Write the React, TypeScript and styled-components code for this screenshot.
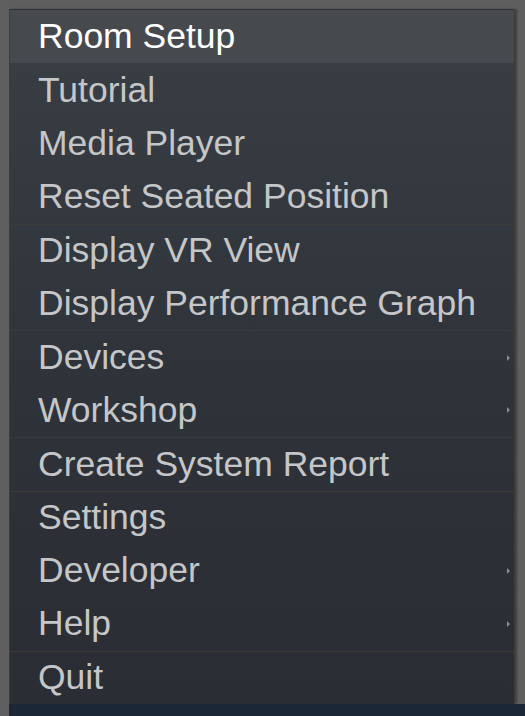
import React from "react";
import styled, { createGlobalStyle } from "styled-components";

const GlobalStyle = createGlobalStyle`
  html, body {
    margin: 0;
    padding: 0;
    background: #5f5f5f;
    height: 716px;
    overflow: hidden;
  }
`;

const Page = styled.div`
  display: flex;
  flex-direction: column;
  padding: 9px 0 0 9px;
`;

const Menu = styled.ul`
  list-style: none;
  margin: 0;
  padding: 0;
  width: 504px;
  background: linear-gradient(180deg, #3a3e45 0%, #2f333a 50%, #2a2d33 100%);
  border-top: 1px solid #2e3136;
  border-left: 1px solid #3a3d42;
  box-shadow: 3px 0 2px rgba(0, 0, 0, 0.35);
  font-family: "Liberation Sans", Arial, sans-serif;
`;

const Item = styled.li<{ $active?: boolean; $sep?: boolean }>`
  position: relative;
  display: flex;
  align-items: center;
  height: 53.4px;
  box-sizing: border-box;
  padding-left: 28px;
  font-size: 35.5px;
  color: ${(p) => (p.$active ? "#ffffff" : "#c4c6c8")};
  background: ${(p) => (p.$active ? "#46494e" : "transparent")};
  border-top: ${(p) => (p.$sep ? "1px solid #3d3b38" : "none")};
`;

const Arrow = styled.span`
  position: absolute;
  right: 4px;
  top: 50%;
  margin-top: -3px;
  width: 0;
  height: 0;
  border-top: 3px solid transparent;
  border-bottom: 3px solid transparent;
  border-left: 3px solid #8a8c8f;
`;

const Footer = styled.div`
  height: 12px;
  background: #1b2636;
`;

const items: { label: string; sep?: boolean; sub?: boolean; active?: boolean }[] = [
  { label: "Room Setup", active: true },
  { label: "Tutorial" },
  { label: "Media Player" },
  { label: "Reset Seated Position" },
  { label: "Display VR View", sep: true },
  { label: "Display Performance Graph" },
  { label: "Devices", sep: true, sub: true },
  { label: "Workshop", sub: true },
  { label: "Create System Report", sep: true },
  { label: "Settings", sep: true },
  { label: "Developer", sub: true },
  { label: "Help", sub: true },
  { label: "Quit", sep: true },
];

export default function App() {
  return (
    <>
      <GlobalStyle />
      <Page>
        <Menu>
          {items.map((it) => (
            <Item key={it.label} $active={it.active} $sep={it.sep}>
              {it.label}
              {it.sub && <Arrow />}
            </Item>
          ))}
        </Menu>
        <Footer />
      </Page>
    </>
  );
}
